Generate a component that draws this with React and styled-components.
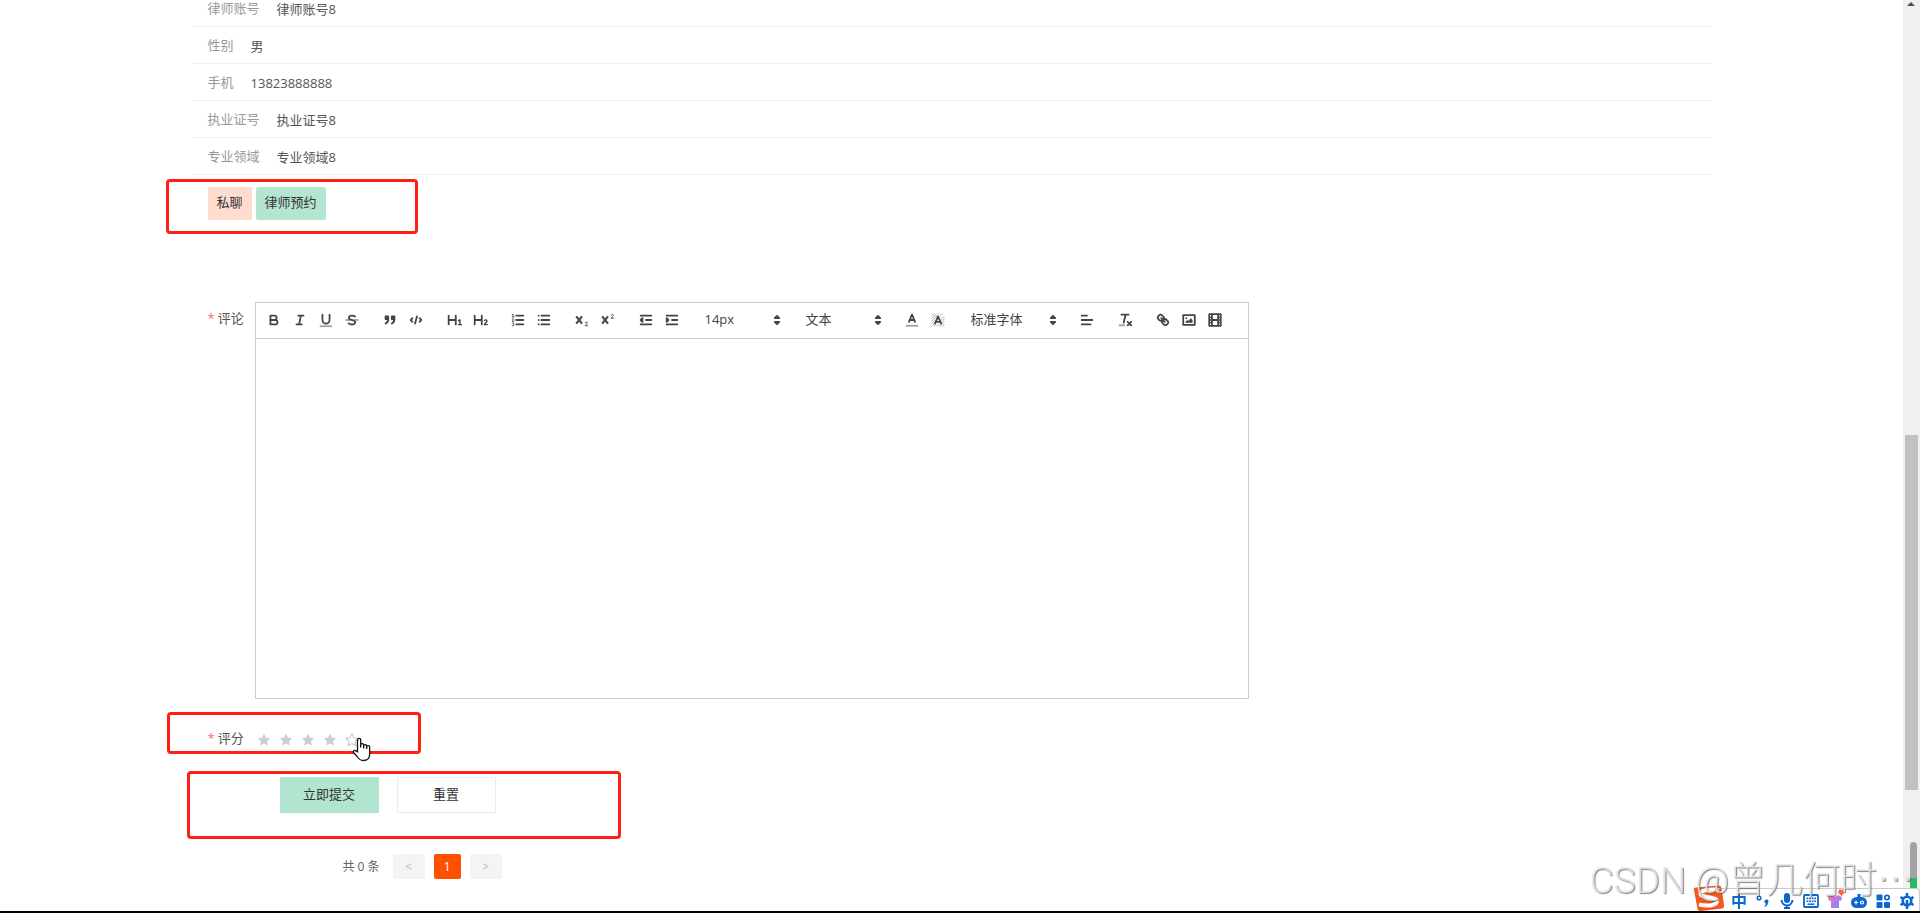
import React, { useState } from "react";
import styled, { createGlobalStyle } from "styled-components";

const GlobalStyle = createGlobalStyle`
  *,
  *::before,
  *::after {
    box-sizing: border-box;
  }

  body {
    margin: 0;
    overflow: hidden;
    background: #fff;
    color: #333;
    font-family: "Open Sans", "Noto Sans CJK SC", sans-serif;
    font-size: 13px;
    line-height: 20px;
  }

  button,
  select {
    font: inherit;
    color: inherit;
    border: 0;
    padding: 0;
    background: none;
    cursor: pointer;
  }
`;

const Screen = styled.div`
  display: flex;
  height: 100vh;
  border-bottom: 2px solid #000;
  overflow: hidden;
`;

const Main = styled.main`
  flex: 1;
  min-width: 0;
  overflow: hidden;
`;

const Container = styled.div`
  width: 80%;
  max-width: 1520px;
  margin: 0 auto;
`;

const DetailList = styled.dl`
  margin: -10px 0 0;
`;

const DetailRow = styled.div`
  display: flex;
  align-items: center;
  gap: 17px;
  height: 37px;
  padding: 0 16px;
  border-bottom: 1px solid #efefef;

  dt {
    color: #999;
  }

  dd {
    margin: 0;
    padding-top: 2px;
    color: #555;
  }
`;

const Section = styled.div`
  position: relative;
  display: flex;
  gap: ${({ $gap }) => $gap || 0}px;
  margin-top: ${({ $top }) => $top}px;
  padding-left: ${({ $indent }) => $indent || 16}px;
`;

const Marker = styled.div`
  position: absolute;
  top: ${({ $top }) => $top}px;
  left: ${({ $left }) => $left}px;
  width: ${({ $width }) => $width}px;
  height: ${({ $height }) => $height}px;
  border: 3px solid #ff2015;
  border-radius: 4px;
  pointer-events: none;
`;

const SmallButton = styled.button`
  height: 33px;
  padding: 0 9px 4px;
  border-radius: 2px;
  background: ${({ $color }) => $color};
`;

const FormLabel = styled.span`
  flex: none;
  width: 47px;
  padding-top: ${({ $top }) => $top || 0}px;
  color: #555;

  &::before {
    content: "*";
    margin-right: 3px;
    color: #f56c6c;
  }
`;

const Editor = styled.div`
  display: flex;
  flex-direction: column;
  flex: 1;
  max-width: 994px;
  height: 397px;
  border: 1px solid #ccc;
`;

const Toolbar = styled.div`
  display: flex;
  flex: none;
  align-items: center;
  gap: 12px;
  height: 36px;
  padding: 0 5px 2px;
  border-bottom: 1px solid #ccc;
  color: #444;
`;

const ToolGroup = styled.div`
  display: flex;
`;

const ToolButton = styled.button`
  display: flex;
  align-items: center;
  justify-content: center;
  width: 26px;
  height: 24px;
`;

const Picker = styled.label`
  position: relative;
  display: flex;
  align-items: center;
  width: ${({ $width }) => $width}px;
  height: 24px;

  select {
    width: 100%;
    height: 24px;
    padding: 0 20px 2px 8px;
    appearance: none;
    outline: 0;
  }

  svg {
    position: absolute;
    right: 1px;
    pointer-events: none;
  }
`;

const EditorText = styled.textarea`
  flex: 1;
  padding: 12px 15px;
  border: 0;
  outline: 0;
  resize: none;
  background: none;
  font: inherit;
`;

const Icon = styled.svg`
  display: block;
  fill: none;
  stroke: currentColor;
  stroke-width: 2;
  stroke-linecap: round;
  stroke-linejoin: round;

  .fill {
    fill: currentColor;
    stroke: none;
  }

  .both {
    fill: currentColor;
  }

  .thin {
    stroke-width: 1;
  }

  .pale {
    opacity: 0.5;
  }
`;

const Rate = styled.div`
  display: flex;
  gap: 6px;
  padding: 6px 0 2px 1px;
`;

const StarLabel = styled.label`
  display: flex;
  width: 16px;
  height: 16px;
  color: #c8cdd6;
  cursor: pointer;

  input {
    position: absolute;
    opacity: 0;
    width: 1px;
    height: 1px;
    margin: 0;
  }
`;

const HandCursor = styled.svg`
  position: absolute;
  top: 11px;
  left: 160px;
  pointer-events: none;
`;

const FormButton = styled.button`
  width: 99px;
  height: 36px;
  padding-bottom: 2px;
  background: ${({ $primary }) => ($primary ? "#b1e5cf" : "#fff")};
  border: 1px solid ${({ $primary }) => ($primary ? "#b1e5cf" : "#ebebeb")};
`;

const Pagination = styled.nav`
  display: flex;
  align-items: center;
  gap: 9px;
  margin-top: 41px;
  padding-left: 151px;
  font-size: 12px;
  color: #606266;

  span {
    margin-right: 4px;
  }
`;

const PageButton = styled.button`
  width: ${({ $active }) => ($active ? 27 : 32)}px;
  height: 25px;
  border-radius: 2px;
  background: ${({ $active }) => ($active ? "#ff5000" : "#f4f4f4")};
  color: ${({ $active }) => ($active ? "#fff" : "#b4b8bf")};
`;

const ScrollTrack = styled.div`
  flex: none;
  width: 17px;
  padding: 0 2px;
  background: #f0f0f0;
  display: flex;
  flex-direction: column;

  svg {
    display: block;
    margin: 2px 0 0 2px;
  }
`;

const ScrollThumb = styled.div`
  height: 39%;
  margin-top: 429px;
  background: #c1c1c1;
`;

const CornerPill = styled.div`
  position: fixed;
  right: 3px;
  bottom: 25px;
  width: 7px;
  height: 46px;
  border-radius: 4px 4px 0 0;
  background: linear-gradient(#a3a3a3 36px, #2fb866 36px);
`;

const ImeBar = styled.div`
  position: fixed;
  right: 0;
  bottom: 2px;
  display: flex;
  align-items: center;
  gap: 8px;
  height: 23px;
  padding: 2px 4px 0 17px;
  border: 1px solid #c3cbd3;
  border-width: 1px 1px 0 0;
  border-radius: 0 4px 0 0;
  background: #fff;
  color: #0b66d0;
  font-size: 16px;
  font-weight: 700;
  line-height: 16px;

  span {
    width: 16px;
  }

  svg {
    display: block;
  }
`;

const ImeLogo = styled.svg`
  position: fixed;
  right: 195px;
  bottom: 2px;
`;

const Watermark = styled.div`
  position: fixed;
  right: 6px;
  bottom: 12px;
  color: rgba(232, 232, 232, 0.85);
  font-family: Roboto, sans-serif;
  font-size: 37px;
  font-weight: 300;
  line-height: 40px;
  white-space: nowrap;
  text-shadow: 1px 1px 1px rgba(80, 80, 80, 0.7);
  pointer-events: none;

  span {
    font-family: "Noto Sans CJK SC", sans-serif;
  }
`;

const icons = {
  bold: (
    <>
      <path d="M5 4H9.5A2.5 2.5 0 0 1 12 6.5v0A2.5 2.5 0 0 1 9.5 9H5V4Z" />
      <path d="M5 9h5.5A2.5 2.5 0 0 1 13 11.5v0A2.5 2.5 0 0 1 10.5 14H5V9Z" />
    </>
  ),
  italic: <path d="M7 4h6M5 14h6M8 14L10 4" />,
  underline: (
    <>
      <path d="M5 3V9a4 4 0 0 0 4 4H9a4 4 0 0 0 4-4V3" />
      <rect className="fill pale" x="2" y="15" width="14" height="2" />
    </>
  ),
  strike: (
    <>
      <path className="thin" d="M2 9h14" />
      <path d="M12.5 5.2C11 3.6 6 3.4 5.5 6c-.3 1.5 1.5 2.5 3.5 3s4 1.3 3.6 3.2C12 14.7 7 14.5 5.2 12.7" />
    </>
  ),
  quote: (
    <>
      <rect className="both" x="4" y="5" width="3" height="3" />
      <rect className="both" x="11" y="5" width="3" height="3" />
      <path className="both" d="M7 8c0 4-3 5-3 5" />
      <path className="both" d="M14 8c0 4-3 5-3 5" />
    </>
  ),
  code: <path d="M5 7L3 9l2 2M13 7l2 2-2 2M10 5L8 13" />,
  h1: (
    <>
      <path d="M3 4v10M11 4v10M11 9H3" />
      <path strokeWidth="1.6" d="M14 9.7l1.7-.9v5.4M14 14.2h3.4" />
    </>
  ),
  h2: (
    <>
      <path d="M3 4v10M11 4v10M11 9H3" />
      <path
        strokeWidth="1.6"
        d="M14 9.6c1-1.3 3-.7 2.8.8-.2 1.2-1.8 2-2.8 3.8h3.2"
      />
    </>
  ),
  ordered: (
    <>
      <path d="M7 4h8M7 9h8M7 14h8" />
      <path
        className="thin"
        d="M2.5 5.5h2M3.5 5.5v-3l-1 .5M2.5 8c2-.9 2.5.6 0 2.5h2M2.5 12.5c2.5-.5 2.5 1.5 1 1.5 1.5 0 1.5 2-1 1.5"
      />
    </>
  ),
  bullet: <path d="M6 4h9M6 9h9M6 14h9M3 4h0M3 9h0M3 14h0" />,
  sub: (
    <>
      <path
        strokeLinecap="butt"
        strokeWidth="2.4"
        d="M2.5 5l6.5 8M9 5l-6.5 8"
      />
      <path
        className="thin"
        d="M12.5 12c.8-1.5 3-.8 2.5.5-.3 1-1.7 1.5-2.5 3H15.5"
      />
    </>
  ),
  sup: (
    <>
      <path
        strokeLinecap="butt"
        strokeWidth="2.4"
        d="M2.5 5l6.5 8M9 5l-6.5 8"
      />
      <path
        className="thin"
        d="M12.5 3.5c.8-1.5 3-.8 2.5.5-.3 1-1.7 1.5-2.5 3H15.5"
      />
    </>
  ),
  outdent: (
    <>
      <path d="M3 14h12M3 4h12M9 9h6" />
      <path className="both" d="M5 7v4L3 9z" />
    </>
  ),
  indent: (
    <>
      <path d="M3 14h12M3 4h12M9 9h6" />
      <path className="both" d="M3 7v4l2-2z" />
    </>
  ),
  color: (
    <>
      <path className="pale" strokeLinecap="butt" d="M2 15.5h14" />
      <path d="M5.5 11L9 3l3.5 8M11.6 9H6.4" />
    </>
  ),
  background: (
    <>
      <path
        className="thin pale"
        d="M2 4l2-2M2 7l5-5M2 10l8-8M2 13l3-3M2 16l4-4M5 16l2-2M8 16l2-2M11 16l5-5M14 16l2-2M13 11l3-3M12 9l4-4M11 5l3-3"
      />
      <path d="M5.5 13L9 5l3.5 8M11.6 11H6.4" />
    </>
  ),
  align: <path d="M3 9h12M3 14h10M3 4h6" />,
  clean: (
    <>
      <path d="M5 3h8M9.5 4L7.5 12M12 11l4 4M16 11l-4 4" />
      <rect className="fill pale" x="2" y="14" width="7" height="2" />
    </>
  ),
  link: (
    <>
      <path d="M7 7l4 4" />
      <path d="M8.9 4.6a3.5 3.5 0 0 1 .4 4.7A3.5 3.5 0 0 1 4.6 8.9C3.2 7.5 2 6.4 4.2 4.2S7.5 3.2 8.9 4.6Z" />
      <path d="M13.4 9.1a3.5 3.5 0 0 0-4.7-.4 3.5 3.5 0 0 0 .4 4.7c1.4 1.4 2.5 2.5 4.7.4s1-3.3-.4-4.7Z" />
    </>
  ),
  image: (
    <>
      <rect x="2.5" y="3.5" width="13" height="11" />
      <circle className="fill" cx="6" cy="7" r="1" />
      <path className="fill" d="M5 12v-1l2-2 1 1 3-3 2 2v3z" />
    </>
  ),
  video: (
    <>
      <rect x="2.5" y="2.5" width="13" height="13" />
      <path d="M5.5 3v12M12.5 3v12M6 9h6" />
      <path
        strokeWidth="1.5"
        d="M3 6h2M3 9h2M3 12h2M13 6h2M13 9h2M13 12h2"
      />
    </>
  ),
  arrows: (
    <>
      <path className="both" d="M6.5 11l2.5 2.5 2.5-2.5z" />
      <path className="both" d="M6.5 7l2.5-2.5 2.5 2.5z" />
    </>
  ),
};

const QuillIcon = ({ name }) => (
  <Icon width="16" height="16" viewBox="0 0 18 18" aria-hidden="true">
    {icons[name]}
  </Icon>
);

const Tools = ({ names }) => (
  <ToolGroup>
    {names.map((name) => (
      <ToolButton key={name} type="button" aria-label={name}>
        <QuillIcon name={name} />
      </ToolButton>
    ))}
  </ToolGroup>
);

const ToolPicker = ({ label, value, width }) => (
  <Picker $width={width}>
    <select aria-label={label} defaultValue={value}>
      <option>{value}</option>
    </select>
    <QuillIcon name="arrows" />
  </Picker>
);

const Star = ({ filled }) => (
  <svg width="16" height="16" viewBox="0 0 16 16" aria-hidden="true">
    <path
      d="M8 1.8l1.9 4 4.3.5-3.2 3 .9 4.3L8 11.5l-3.9 2.1.9-4.3-3.2-3 4.3-.5z"
      fill={filled ? "currentColor" : "none"}
      stroke={filled ? "none" : "currentColor"}
      strokeWidth="1.2"
      strokeLinejoin="round"
    />
  </svg>
);

const details = [
  ["律师账号", "律师账号8"],
  ["性别", "男"],
  ["手机", "13823888888"],
  ["执业证号", "执业证号8"],
  ["专业领域", "专业领域8"],
];

const ImeTools = () => (
  <ImeBar>
    <span>中</span>
    <svg width="16" height="16" viewBox="0 0 16 16">
      <circle
        cx="4"
        cy="5"
        r="1.8"
        fill="none"
        stroke="currentColor"
        strokeWidth="1.5"
      />
      <path
        d="M9.5 8.5a2 2 0 1 1 3.5 1.3c0 2-1.5 3.5-3 4.2l-.6-1c1-.7 1.5-1.5 1.5-2.5-.9 0-1.4-.9-1.4-2z"
        fill="currentColor"
      />
    </svg>
    <svg width="16" height="16" viewBox="0 0 16 16">
      <rect x="5" y="0" width="6" height="10" rx="3" fill="currentColor" />
      <path
        d="M2.5 7a5.5 5.5 0 0 0 11 0M8 12.5V15M5 15h6"
        fill="none"
        stroke="currentColor"
        strokeWidth="2"
      />
    </svg>
    <svg width="16" height="16" viewBox="0 0 16 16">
      <rect
        x="1"
        y="2"
        width="14"
        height="12"
        rx="1"
        fill="none"
        stroke="currentColor"
        strokeWidth="1.8"
      />
      <path
        d="M3.5 5.4h9.5M3.5 8.2h9.5"
        stroke="currentColor"
        strokeWidth="1.6"
        strokeDasharray="1.8 .8"
      />
      <path d="M4.5 11.2h7" stroke="currentColor" strokeWidth="1.5" />
    </svg>
    <svg width="16" height="16" viewBox="0 0 16 16" overflow="visible">
      <defs>
        <linearGradient id="shirt" x1="0" y1="0" x2="1" y2="1">
          <stop offset="0" stopColor="#f2738a" />
          <stop offset="0.5" stopColor="#b77bec" />
          <stop offset="1" stopColor="#6b8bff" />
        </linearGradient>
      </defs>
      <path
        d="M1 4l4-2c1 2 5 2 6 0l4 2-1 4-2-.5V15H4V7.5L2 8z"
        fill="url(#shirt)"
      />
      <path d="M12.5-4l2.5 1 2-1.5L17.5-.5 14.5 3 11-.5z" fill="#ff6540" />
    </svg>
    <svg width="16" height="16" viewBox="0 0 16 16">
      <rect x="0" y="4" width="16" height="11" rx="5.5" fill="currentColor" />
      <path d="M8 1v3" stroke="currentColor" strokeWidth="3" />
      <path d="M3 9.5h4M5 7.5v4" stroke="#fff" strokeWidth="1.2" />
      <circle
        cx="11"
        cy="9.5"
        r="1.5"
        fill="none"
        stroke="#fff"
        strokeWidth="1.2"
      />
    </svg>
    <svg width="16" height="16" viewBox="0 0 16 16">
      <rect x="1.5" y="1.5" width="6" height="6" rx="1" fill="currentColor" />
      <rect x="1.5" y="9" width="6" height="6" rx="1" fill="currentColor" />
      <rect x="9" y="9" width="6" height="6" rx="1" fill="currentColor" />
      <circle
        cx="12"
        cy="4.5"
        r="2.2"
        fill="none"
        stroke="currentColor"
        strokeWidth="1.7"
      />
    </svg>
    <svg width="16" height="16" viewBox="0 0 16 16">
      <circle
        cx="8"
        cy="8"
        r="4.3"
        fill="none"
        stroke="currentColor"
        strokeWidth="2.6"
      />
      <path
        d="M8 0v3M8 7v9M1.5 4l3 1.8M14.5 4l-3 1.8M1.5 12l3-1.8M14.5 12l-3-1.8"
        stroke="currentColor"
        strokeWidth="2.6"
      />
    </svg>
  </ImeBar>
);

const App = () => {
  const [score, setScore] = useState(4);

  return (
    <>
      <GlobalStyle />
      <Screen>
        <Main>
          <Container>
            <DetailList>
              {details.map(([name, value]) => (
                <DetailRow key={name}>
                  <dt>{name}</dt>
                  <dd>{value}</dd>
                </DetailRow>
              ))}
            </DetailList>

            <Section $top={12} $gap={4}>
              <SmallButton type="button" $color="#ffdbd0">
                私聊
              </SmallButton>
              <SmallButton type="button" $color="#b3e5d0">
                律师预约
              </SmallButton>
              <Marker $top={-8} $left={-26} $width={252} $height={55} />
            </Section>

            <form onSubmit={(e) => e.preventDefault()}>
              <Section $top={82}>
                <FormLabel as="label" htmlFor="comment" $top={6}>
                  评论
                </FormLabel>
                <Editor>
                  <Toolbar>
                    <Tools names={["bold", "italic", "underline", "strike"]} />
                    <Tools names={["quote", "code"]} />
                    <Tools names={["h1", "h2"]} />
                    <Tools names={["ordered", "bullet"]} />
                    <Tools names={["sub", "sup"]} />
                    <Tools names={["outdent", "indent"]} />
                    <ToolPicker label="size" value="14px" width={89} />
                    <ToolPicker label="header" value="文本" width={89} />
                    <Tools names={["color", "background"]} />
                    <ToolPicker label="font" value="标准字体" width={99} />
                    <Tools names={["align"]} />
                    <Tools names={["clean"]} />
                    <Tools names={["link", "image", "video"]} />
                  </Toolbar>
                  <EditorText id="comment" />
                </Editor>
              </Section>

              <Section $top={27}>
                <FormLabel $top={2}>评分</FormLabel>
                <Rate role="radiogroup" aria-label="评分">
                  {[1, 2, 3, 4, 5].map((n) => (
                    <StarLabel key={n}>
                      <input
                        type="radio"
                        name="score"
                        aria-label={String(n)}
                        checked={score === n}
                        onChange={() => setScore(n)}
                      />
                      <Star filled={n <= score} />
                    </StarLabel>
                  ))}
                </Rate>
                <Marker $top={-14} $left={-25} $width={254} $height={42} />
                <HandCursor width="20" height="25" viewBox="0 0 20 25">
                  <path
                    d="M5.5 15V3a1.6 1.6 0 0 1 3.2 0v7V8a1.5 1.5 0 0 1 3 .3V11 9a1.5 1.5 0 0 1 3 .3V11.5 10a1.5 1.5 0 0 1 3 .3V17c0 4-2.5 6.5-6.5 6.5-3.5 0-5-2-6.5-4.5L1.5 15.5c-.8-1.6 1.2-2.8 2.4-1.6z"
                    fill="#fff"
                    stroke="#111"
                    strokeWidth="1.3"
                    strokeLinejoin="round"
                  />
                </HandCursor>
              </Section>

              <Section $top={27} $gap={18} $indent={88}>
                <FormButton type="submit" $primary>
                  立即提交
                </FormButton>
                <FormButton type="reset">重置</FormButton>
                <Marker $top={-6} $left={-5} $width={434} $height={68} />
              </Section>
            </form>

            <Pagination>
              <span>共 0 条</span>
              <PageButton type="button">&lt;</PageButton>
              <PageButton type="button" $active>
                1
              </PageButton>
              <PageButton type="button">&gt;</PageButton>
            </Pagination>
          </Container>
        </Main>
        <ScrollTrack>
          <svg width="8" height="4" viewBox="0 0 8 4">
            <path d="M0 4l4-4 4 4z" fill="#505050" />
          </svg>
          <ScrollThumb />
        </ScrollTrack>
      </Screen>

      <CornerPill />
      <ImeTools />
      <ImeLogo width="32" height="26" viewBox="0 0 32 26">
        <path
          d="M1 5Q0 3 3 2.5L25 .5Q28 0 28.5 3L31 20Q31.5 23 29 23.5L8 26Q5 26.5 4.5 24z"
          fill="#f4581f"
        />
        <path
          d="M26 5C18 3.5 7 5 7.5 9s16.5 2.5 16.5 7-9 5.5-18 3.5"
          fill="none"
          stroke="#fff"
          strokeWidth="4"
        />
      </ImeLogo>
      <Watermark>
        CSDN @<span>曾几何时…</span>
      </Watermark>
    </>
  );
};

export default App;
